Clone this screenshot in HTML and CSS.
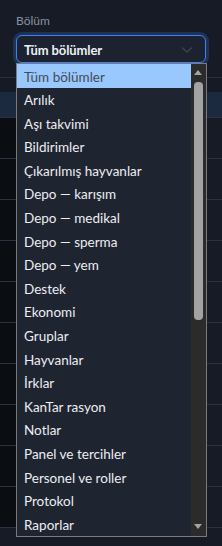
FILE: index.html
```html
<!DOCTYPE html>
<html lang="tr">
<head>
<meta charset="utf-8">
<title>Bölüm</title>
<link rel="stylesheet" href="styles.css">
</head>
<body>
<div class="page">
  <div class="filter">
    <label class="label">Bölüm</label>
    <div class="select">
      <span class="select-text">Tüm bölümler</span>
      <svg class="chev" width="12" height="8" viewBox="0 0 12 8"><path d="M1 1.5 L6 6 L11 1.5" fill="none" stroke="#3a4252" stroke-width="1.5"/></svg>
    </div>
  </div>
  <div class="table">
    <div class="row head"><div class="cell"></div></div>
    <div class="row sel"><div class="cell"></div></div>
    <div class="row"><div class="cell"></div></div>
    <div class="row"><div class="cell"></div></div>
    <div class="row"><div class="cell"></div></div>
    <div class="row"><div class="cell"></div></div>
    <div class="row"><div class="cell"></div></div>
    <div class="row"><div class="cell"></div></div>
    <div class="row"><div class="cell"></div></div>
    <div class="row"><div class="cell"></div></div>
    <div class="row"><div class="cell"></div></div>
    <div class="row"><div class="cell"></div></div>
  </div>
  <div class="popup">
    <ul class="options">
      <li class="opt active">Tüm bölümler</li>
      <li class="opt">Arılık</li>
      <li class="opt">Aşı takvimi</li>
      <li class="opt">Bildirimler</li>
      <li class="opt">Çıkarılmış hayvanlar</li>
      <li class="opt">Depo — karışım</li>
      <li class="opt">Depo — medikal</li>
      <li class="opt">Depo — sperma</li>
      <li class="opt">Depo — yem</li>
      <li class="opt">Destek</li>
      <li class="opt">Ekonomi</li>
      <li class="opt">Gruplar</li>
      <li class="opt">Hayvanlar</li>
      <li class="opt">İrklar</li>
      <li class="opt">KanTar rasyon</li>
      <li class="opt">Notlar</li>
      <li class="opt">Panel ve tercihler</li>
      <li class="opt">Personel ve roller</li>
      <li class="opt">Protokol</li>
      <li class="opt">Raporlar</li>
    </ul>
    <div class="scrollbar">
      <span class="arrow up"></span>
      <span class="thumb"></span>
      <span class="arrow down"></span>
    </div>
  </div>
</div>
</body>
</html>
```
FILE: styles.css
```css
* { box-sizing: border-box; }
html, body { margin: 0; padding: 0; }
body {
  background: #161b26;
  font-family: "Lato", "Liberation Sans", sans-serif;
  width: 222px;
  height: 546px;
  overflow: hidden;
}
.page { position: relative; height: 546px; }
.filter {
  padding: 13px 16px 14px 16px;
  display: flex;
  flex-direction: column;
  gap: 6px;
}
.label {
  font-size: 12px;
  line-height: 16px;
  color: #8891a1;
}
.select {
  height: 28px;
  width: 190px;
  border: 1px solid #3b82f6;
  border-radius: 6px;
  background: #1c2230;
  box-shadow: 0 0 0 3px rgba(59,130,246,0.22);
  display: flex;
  align-items: center;
  justify-content: space-between;
  padding: 1px 12px 0 7px;
}
.select-text {
  font-size: 13px;
  font-weight: 700;
  letter-spacing: -0.1px;
  color: #eef0f4;
}
.table { border-top: 1px solid #2a3242; }
.row { height: 41px; border-bottom: 1px solid #2a3242; }
.row.head { height: 14px; border-bottom: none; background: #151a24; }
.row.sel { height: 26px; background: #1b2a3e; }
.row .cell { width: 120px; height: 100%; }
.row:not(.head):not(.sel) .cell { background: #0a0d12; }
.popup {
  position: absolute;
  left: 16px;
  top: 63px;
  width: 191px;
  height: 474px;
  border: 1px solid #7a7a7a;
  background: #1f2431;
  display: flex;
  overflow: hidden;
}
.options {
  list-style: none;
  margin: 0;
  padding: 0;
  flex: 1;
}
.opt {
  height: 23.6px;
  line-height: 23.6px;
  padding: 1.5px 0 0 7px;
  font-size: 13.5px;
  color: #eceef2;
  white-space: nowrap;
}
.opt.active {
  background: #99c8ff;
  color: #464b53;
}
.scrollbar {
  width: 15px;
  background: #2b2b2b;
  position: relative;
  flex: none;
}
.arrow {
  position: absolute;
  left: 3px;
  width: 0; height: 0;
  border-left: 4.5px solid transparent;
  border-right: 4.5px solid transparent;
}
.arrow.up { top: 6px; border-bottom: 5px solid #a3a3a3; }
.arrow.down { bottom: 7px; border-top: 5px solid #a3a3a3; }
.thumb {
  position: absolute;
  left: 3px;
  top: 18px;
  width: 9px;
  height: 238px;
  background: #a3a3a3;
  border-radius: 4px;
}
```
